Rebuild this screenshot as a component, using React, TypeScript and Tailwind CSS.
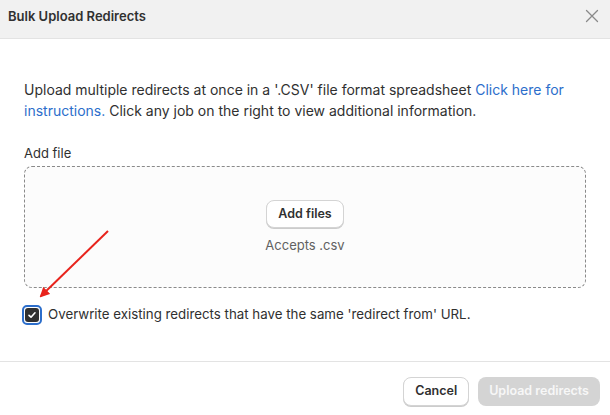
import React from "react";

const App: React.FC = () => {
  return (
    <div
      className="relative w-[610px] h-[415px] bg-white text-[#303030] overflow-hidden"
      style={{ fontFamily: "Inter, 'Liberation Sans', sans-serif" }}
    >
      {/* Header */}
      <div className="h-[39px] bg-[#f1f1f1] border-b border-[#e3e3e3] flex items-start justify-between pl-2 pr-[9px] pt-[6px]">
        <h1 className="text-[13px] leading-[20px] font-semibold text-[#303030]">Bulk Upload Redirects</h1>
        <button className="mt-[1px] w-[18px] h-[18px] flex items-center justify-center text-[#8a8a8a]">
          <svg width="14" height="14" viewBox="0 0 14 14" fill="none">
            <path d="M1.5 1.5L12.5 12.5M12.5 1.5L1.5 12.5" stroke="currentColor" strokeWidth="1.3" strokeLinecap="round" />
          </svg>
        </button>
      </div>

      {/* Body */}
      <div className="px-6 pt-[40px]">
        <p className="text-[14px] leading-[21px] text-[#303030]">
          Upload multiple redirects at once in a '.CSV' file format spreadsheet{" "}
          <a className="text-[#2c6ecb]">Click here for instructions.</a> Click any job on the right to view
          additional information.
        </p>

        <div className="mt-[22px] text-[13px] leading-[20px]">Add file</div>
        <div className="mt-[3px] h-[122px] rounded-lg border border-dashed border-[#8a8a8a] bg-[#fcfcfc] flex flex-col items-center justify-center">
          <button className="mt-[2px] h-[28px] px-[11px] rounded-lg border border-[#d4d4d4] bg-white text-[12.5px] font-semibold text-[#303030] shadow-[0_1px_0_#cccccc]">
            Add files
          </button>
          <div className="mt-[8px] text-[13px] text-[#616161]">Accepts .csv</div>
        </div>

        <label className="mt-[17px] -ml-[2px] flex items-center gap-[6px]">
          <span className="w-[20px] h-[20px] rounded-[5px] border-2 border-[#2c6ecb] p-[1px] flex">
            <span className="flex-1 rounded-[3px] bg-[#303030] flex items-center justify-center">
              <svg width="10" height="10" viewBox="0 0 10 10" fill="none">
                <path d="M2 5.3L4 7.2L8 2.8" stroke="white" strokeWidth="1.6" strokeLinecap="round" strokeLinejoin="round" />
              </svg>
            </span>
          </span>
          <span className="text-[13.3px] text-[#303030]">
            Overwrite existing redirects that have the same 'redirect from' URL.
          </span>
        </label>
      </div>

      {/* Footer */}
      <div className="absolute left-0 right-0 bottom-0 h-[54px] border-t border-[#e3e3e3] flex items-start justify-end gap-[9px] pr-[10px] pt-[15px]">
        <button className="h-[29px] px-[11px] rounded-lg border border-[#d4d4d4] bg-white text-[12.5px] font-semibold text-[#303030] shadow-[0_1px_0_#cccccc]">
          Cancel
        </button>
        <button className="h-[29px] px-[11px] rounded-lg bg-[#d4d4d4] text-[12.5px] font-semibold text-[#f7f7f7]">
          Upload redirects
        </button>
      </div>

      {/* Annotation arrow */}
      <svg className="absolute left-0 top-0 pointer-events-none" width="610" height="415">
        <defs>
          <marker id="ah" markerWidth="10" markerHeight="10" refX="8" refY="5" orient="auto" markerUnits="userSpaceOnUse">
            <path d="M0 0L10 5L0 10Z" fill="#e8231c" />
          </marker>
        </defs>
        <line x1="108" y1="231" x2="41" y2="296" stroke="#e8231c" strokeWidth="2" markerEnd="url(#ah)" />
      </svg>
    </div>
  );
};

export default App;
